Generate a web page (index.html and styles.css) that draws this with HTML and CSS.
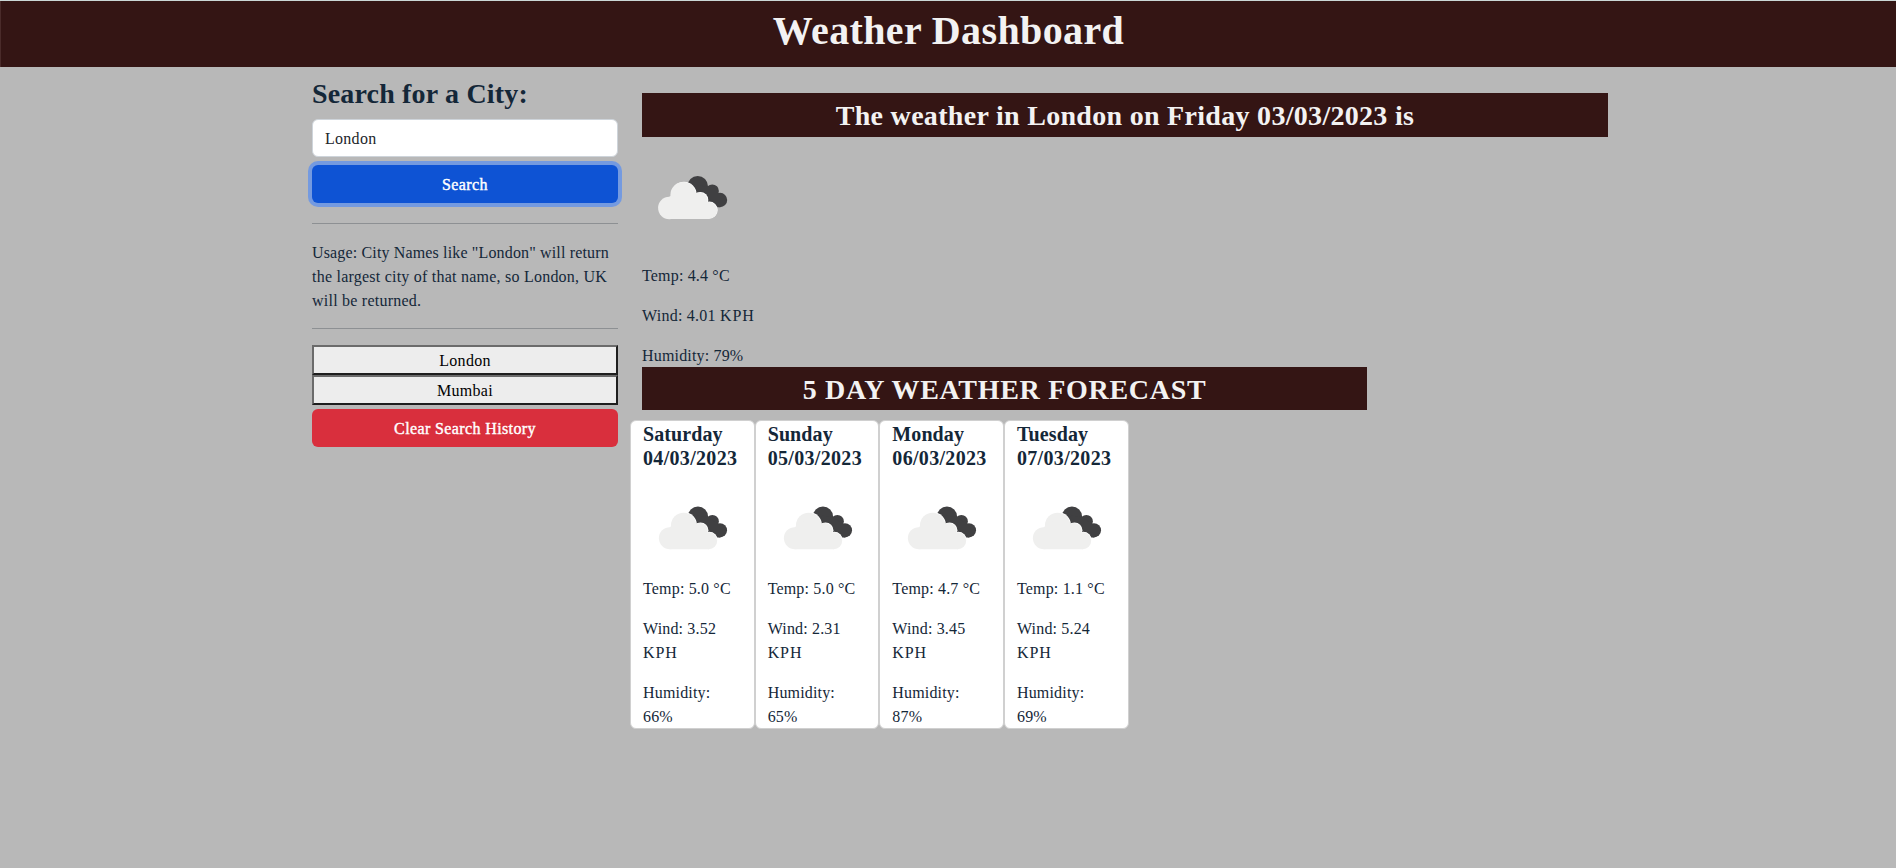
FILE: index.html
```
<!DOCTYPE html>
<html lang="en">
<head>
<meta charset="utf-8">
<title>Weather Dashboard</title>
<link rel="stylesheet" href="styles.css">
</head>
<body>
<svg class="defs" width="0" height="0" aria-hidden="true">
  <symbol id="clouds" viewBox="0 0 100 100">
    <g fill="#404042"><circle cx="55.7" cy="39.3" r="10.3"/><circle cx="70.3" cy="44" r="6.6"/><circle cx="78" cy="53" r="7.2"/><path d="M55 38L66 40L76 46L82 56L78 60.2H62L48 46Z"/></g>
    <g fill="#fff"><circle cx="42" cy="47.4" r="12.6"/><circle cx="58.3" cy="53" r="8"/><circle cx="67.2" cy="63" r="8.5"/></g>
    <g fill="#efefee"><circle cx="27.3" cy="61" r="11.2"/><circle cx="41.2" cy="47.9" r="12.8"/><circle cx="57.6" cy="53.6" r="8"/><circle cx="66.7" cy="63.6" r="8.5"/><path d="M27 50L42 40L60 50L67 58V72.1H27Z"/></g>
  </symbol>
</svg>
<header class="banner"><h1>Weather Dashboard</h1></header>
<div class="layout">
  <aside class="sidebar">
    <h2>Search for a City:</h2>
    <input class="field" type="text" value="London">
    <button class="btn primary">Search</button>
    <hr>
    <p class="usage">Usage: City Names like "London" will return <span class="looser">the largest city of that name, so London, UK will be returned.</span></p>
    <hr>
    <div class="history">
      <button class="past">London</button>
      <button class="past">Mumbai</button>
    </div>
    <button class="btn danger">Clear Search History</button>
  </aside>
  <main class="content">
    <h2 class="bar today-bar">The weather in London on Friday 03/03/2023 is</h2>
    <section class="today">
      <svg class="icon"><use href="#clouds"/></svg>
      <p>Temp: 4.4 °C</p>
      <p class="wind">Wind: 4.01 <span class="unit">KPH</span></p>
      <p>Humidity: 79%</p>
    </section>
    <h2 class="bar forecast-bar">5 DAY WEATHER FORECAST</h2>
    <section class="cards">
      <article class="card">
        <h5>Saturday <span class="date">04/03/2023</span></h5>
        <svg class="icon"><use href="#clouds"/></svg>
        <p>Temp: 5.0 °C</p>
        <p>Wind: 3.52 <span class="unit">KPH</span></p>
        <p>Humidity: 66%</p>
      </article>
      <article class="card">
        <h5>Sunday <span class="date">05/03/2023</span></h5>
        <svg class="icon"><use href="#clouds"/></svg>
        <p>Temp: 5.0 °C</p>
        <p>Wind: 2.31 <span class="unit">KPH</span></p>
        <p>Humidity: 65%</p>
      </article>
      <article class="card">
        <h5>Monday <span class="date">06/03/2023</span></h5>
        <svg class="icon"><use href="#clouds"/></svg>
        <p>Temp: 4.7 °C</p>
        <p>Wind: 3.45 <span class="unit">KPH</span></p>
        <p>Humidity: 87%</p>
      </article>
      <article class="card">
        <h5>Tuesday <span class="date">07/03/2023</span></h5>
        <svg class="icon"><use href="#clouds"/></svg>
        <p>Temp: 1.1 °C</p>
        <p>Wind: 5.24 <span class="unit">KPH</span></p>
        <p>Humidity: 69%</p>
      </article>
    </section>
  </main>
</div>
</body>
</html>
```
FILE: styles.css
```
* { box-sizing: border-box; }
body {
  margin: 0;
  border-top: 1px solid #cbd7d6;
  background: #b8b8b8;
  color: #142738;
  font: 16px/24px "Liberation Serif", serif;
}
h1, h2, h5, p { margin: 0; }
.defs { position: absolute; }
.banner {
  height: 66px;
  background: #341514;
  border-left: 1px solid #4a2b2a;
  color: #f3f2f2;
  text-align: center;
}
.banner h1 { font-size: 40px; line-height: 48px; padding-top: 6px; letter-spacing: 0.38px; }
.layout { display: flex; width: 1320px; margin-left: 300px; }
.sidebar { width: 330px; padding: 10px 12px 0; }
.sidebar h2 { font-size: 28px; line-height: 34px; margin-bottom: 8px; letter-spacing: 0.17px; }
.field {
  display: block;
  width: 100%;
  height: 38px;
  padding: 7px 12px 5px;
  border: 1px solid #ced4da;
  border-radius: 6px;
  background: #fff;
  color: #212529;
  font: inherit;
  letter-spacing: 0.28px;
}
.btn {
  display: block;
  width: 100%;
  height: 38px;
  padding: 2px 12px 0;
  border: 0;
  border-radius: 6px;
  color: #fff;
  font: inherit;
  letter-spacing: 0.38px;
  -webkit-text-stroke: 0.4px #fff;
}
.primary { margin-top: 8px; background: #0e53d4; box-shadow: 0 0 0 4px #749ae0; }
.danger { margin-top: 4px; background: #d92f3d; }
hr { height: 1px; margin: 20px 0 17px; border: 0; background: #8d9093; }
.usage { letter-spacing: 0.15px; }
.looser { letter-spacing: 0.23px; }
.usage + hr { margin: 15px 0 16px; }
.past {
  display: block;
  width: 100%;
  height: 30px;
  padding: 2px 6px 0;
  border: 2px solid;
  border-color: #6b6b6b #1e1e1e #1e1e1e #6b6b6b;
  background: #ededed;
  color: #000;
  font: inherit;
  letter-spacing: 0.3px;
}
.content { width: 990px; padding: 26px 12px 0; }
.bar { background: #341514; color: #f3f2f2; font-size: 28px; text-align: center; }
.today-bar { height: 44px; line-height: 46px; letter-spacing: 0.3px; }
.forecast-bar { width: 725px; height: 43px; line-height: 45px; letter-spacing: 0.7px; }
.today { height: 230px; padding-top: 10px; }
.icon { display: block; width: 100px; height: 100px; margin-bottom: 17px; }
.today p, .card p { margin-bottom: 16px; letter-spacing: 0.17px; }
.today .wind { letter-spacing: 0.25px; }
.unit { letter-spacing: 0.9px; }
.cards { display: flex; margin: 10px 0 0 -12px; }
.card {
  width: 124.67px;
  height: 309px;
  padding: 1px 12px 0;
  border: 1px solid #d0d0d0;
  border-radius: 6px;
  background: #fff;
}
.card h5 { font-size: 20px; line-height: 24px; margin-bottom: 8px; letter-spacing: 0.1px; }
.card .date { letter-spacing: 0.32px; }
.card .icon { width: 98.67px; height: 98.67px; margin-bottom: 0; }
```
